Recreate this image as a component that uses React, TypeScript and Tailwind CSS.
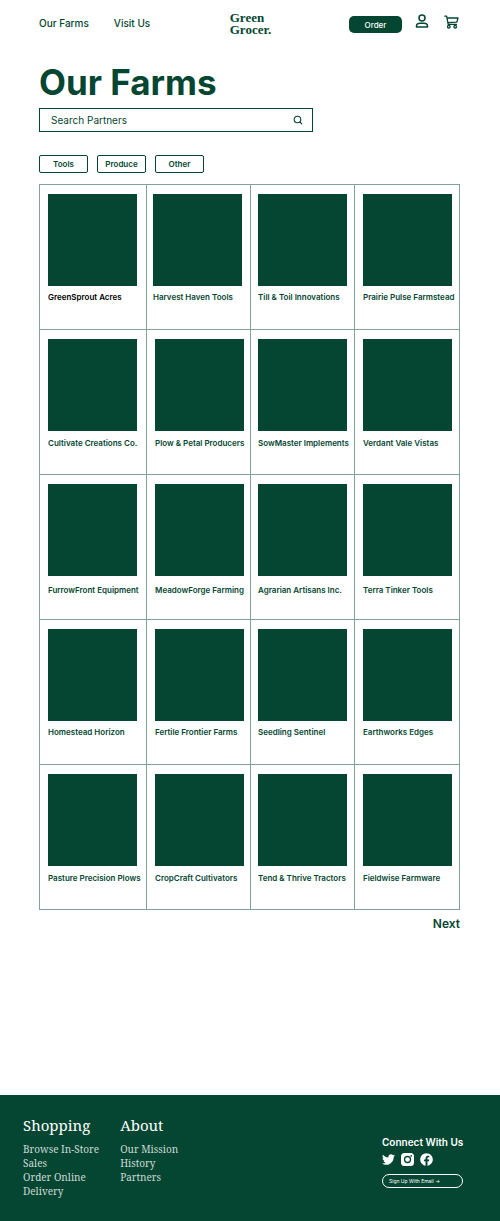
import React from "react";
import { FaFacebook, FaTwitter } from "react-icons/fa";

type Farm = { name: string; tone?: string; cell?: string };

const rows: { gap: string; farms: Farm[] }[] = [
  {
    gap: "pt-1",
    farms: [
      { name: "GreenSprout Acres", tone: "text-black" },
      { name: "Harvest Haven Tools", cell: "pl-1.5 pr-2" },
      { name: "Till & Toil Innovations" },
      { name: "Prairie Pulse Farmstead" },
    ],
  },
  {
    gap: "pt-[5px]",
    farms: [
      { name: "Cultivate Creations Co." },
      { name: "Plow & Petal Producers" },
      { name: "SowMaster Implements" },
      { name: "Verdant Vale Vistas" },
    ],
  },
  {
    gap: "pt-[7px]",
    farms: [
      { name: "FurrowFront Equipment" },
      { name: "MeadowForge Farming" },
      { name: "Agrarian Artisans Inc." },
      { name: "Terra Tinker Tools" },
    ],
  },
  {
    gap: "pt-1",
    farms: [
      { name: "Homestead Horizon" },
      { name: "Fertile Frontier Farms" },
      { name: "Seedling Sentinel" },
      { name: "Earthworks Edges" },
    ],
  },
  {
    gap: "pt-[5px]",
    farms: [
      { name: "Pasture Precision Plows" },
      { name: "CropCraft Cultivators" },
      { name: "Tend & Thrive Tractors" },
      { name: "Fieldwise Farmware" },
    ],
  },
];

const columnPadding = ["pl-2 pr-[9px]", "pl-2 pr-1.5", "px-[7px]", "pl-2 pr-[7px]"];

function UserIcon() {
  return (
    <svg viewBox="0 0 14 14" className="size-3.5" fill="none" stroke="currentColor" strokeWidth="1.5" strokeLinejoin="round" aria-hidden="true">
      <circle cx="7" cy="4" r="3" />
      <path d="M1.500 13 V12.300 C1.500 10.300 3 9.300 5 9.300 H9 C11 9.300 12.500 10.300 12.500 12.300 V13 Z" />
    </svg>
  );
}

function CartIcon() {
  return (
    <svg viewBox="0 0 15 14" className="h-3.5 w-[15px]" fill="none" stroke="currentColor" strokeWidth="1.3" strokeLinecap="round" strokeLinejoin="round" aria-hidden="true">
      <path d="M0.800 1.200 H2.600 L4.200 9.400 H12.400 M3 3 H14 L12.800 7.200 L3.800 7.600" />
      <circle cx="4.800" cy="11.700" r="1.300" />
      <circle cx="11.200" cy="11.700" r="1.300" />
    </svg>
  );
}

function SearchIcon() {
  return (
    <svg viewBox="0 0 10 10" className="size-2.5" fill="none" stroke="currentColor" strokeWidth="1.1" strokeLinecap="round" aria-hidden="true">
      <circle cx="4.500" cy="4.500" r="3.300" />
      <path d="M7 7 L8.800 8.800" />
    </svg>
  );
}

function InstagramIcon() {
  return (
    <svg viewBox="0 0 13 13" className="size-[13px]" aria-hidden="true">
      <rect width="13" height="13" rx="3.500" fill="currentColor" />
      <circle cx="6.500" cy="6.500" r="3" fill="none" stroke="#044631" strokeWidth="1.300" />
      <circle cx="10.200" cy="2.800" r="0.900" fill="#044631" />
    </svg>
  );
}

function Header() {
  return (
    <header className="grid grid-cols-[1fr_auto_1fr] items-start pr-[41px] pl-[39px] pt-3">
      <nav className="flex gap-[25px] pt-[3px] text-[10px] leading-4 font-medium">
        <a href="#farms">Our Farms</a>
        <a href="#visit">Visit Us</a>
      </nav>
      <a href="#home" className="pl-[3px] font-['Liberation_Serif',serif] text-[13px] leading-3 font-bold">
        <span className="block">Green</span>
        <span className="block">Grocer.</span>
      </a>
      <div className="flex items-start justify-end">
        <button className="mt-1 h-[17px] w-[53px] rounded-[5px] bg-[#044631] text-[8px] leading-4 font-medium text-white">Order</button>
        <button aria-label="Account" className="mt-0.5 ml-[13px]">
          <UserIcon />
        </button>
        <button aria-label="Cart" className="mt-[3px] ml-[15px]">
          <CartIcon />
        </button>
      </div>
    </header>
  );
}

function FooterLinks({ title, links }: { title: string; links: string[] }) {
  return (
    <section>
      <h2 className="text-[15px] leading-5 text-white">{title}</h2>
      <ul className="mt-[7px] text-[10px] leading-3.5 text-[#cddad6]">
        {links.map((link) => (
          <li key={link}>
            <a href="#footer">{link}</a>
          </li>
        ))}
      </ul>
    </section>
  );
}

export default function App() {
  return (
    <div className="bg-white font-['Inter',sans-serif] text-[#044631]">
      <Header />
      <main className="pr-10 pb-[163px] pl-[39px]">
        <h1 className="mt-6 text-[35px] leading-11 font-bold">Our Farms</h1>
        <form role="search" className="mt-1 flex h-6 w-[65%] items-center border border-[#044631] pr-[9px] pl-[11px]">
          <input
            type="search"
            aria-label="Search Partners"
            placeholder="Search Partners"
            className="min-w-0 flex-1 text-[10px] leading-4 outline-none placeholder:text-[#044631]"
          />
          <button type="button" aria-label="Search">
            <SearchIcon />
          </button>
        </form>
        <div className="mt-[23px] flex gap-[9px]">
          {["Tools", "Produce", "Other"].map((label) => (
            <button key={label} className="h-[18px] w-[49px] rounded-[2px] border border-[#044631] text-[8px] leading-4 font-semibold">
              {label}
            </button>
          ))}
        </div>
        <ul className="mt-[11px] grid grid-cols-[107fr_104fr_104fr_105fr] border-t border-l border-[#044631]/50">
          {rows.map((row) =>
            row.farms.map((farm, column) => (
              <li
                key={farm.name}
                className={`min-w-0 border-r border-b border-[#044631]/50 pt-[9px] pb-7 ${farm.cell ?? columnPadding[column]}`}
              >
                <div className="h-[92px] bg-[#044631]" />
                <div className="h-[15px]">
                  <p className={`text-[8px] leading-3.5 font-semibold whitespace-nowrap ${row.gap} ${farm.tone ?? ""}`}>{farm.name}</p>
                </div>
              </li>
            )),
          )}
        </ul>
        <div className="mt-1.5 text-right text-[12px] leading-4 font-semibold">
          <a href="#next">Next</a>
        </div>
      </main>
      <footer id="footer" className="flex items-start bg-[#044631] pt-5 pr-[37px] pb-[23px] pl-[23px] text-white">
        <div className="flex gap-[21px] font-['Noto_Serif','DejaVu_Serif_Condensed','DejaVu_Serif',serif]">
          <FooterLinks title="Shopping" links={["Browse In-Store", "Sales", "Order Online", "Delivery"]} />
          <FooterLinks title="About" links={["Our Mission", "History", "Partners"]} />
        </div>
        <section className="mt-5 ml-auto w-[81px]">
          <h2 className="text-[10px] leading-3.5 font-semibold whitespace-nowrap">Connect With Us</h2>
          <div className="mt-1 flex gap-1.5">
            <a href="#twitter" aria-label="Twitter">
              <FaTwitter className="size-[13px]" />
            </a>
            <a href="#instagram" aria-label="Instagram">
              <InstagramIcon />
            </a>
            <a href="#facebook" aria-label="Facebook">
              <FaFacebook className="size-[13px]" />
            </a>
          </div>
          <button className="mt-2 block h-3.5 w-full rounded-full border border-white pl-1.5 text-left text-[5px] leading-3">Sign Up With Email →</button>
        </section>
      </footer>
    </div>
  );
}
